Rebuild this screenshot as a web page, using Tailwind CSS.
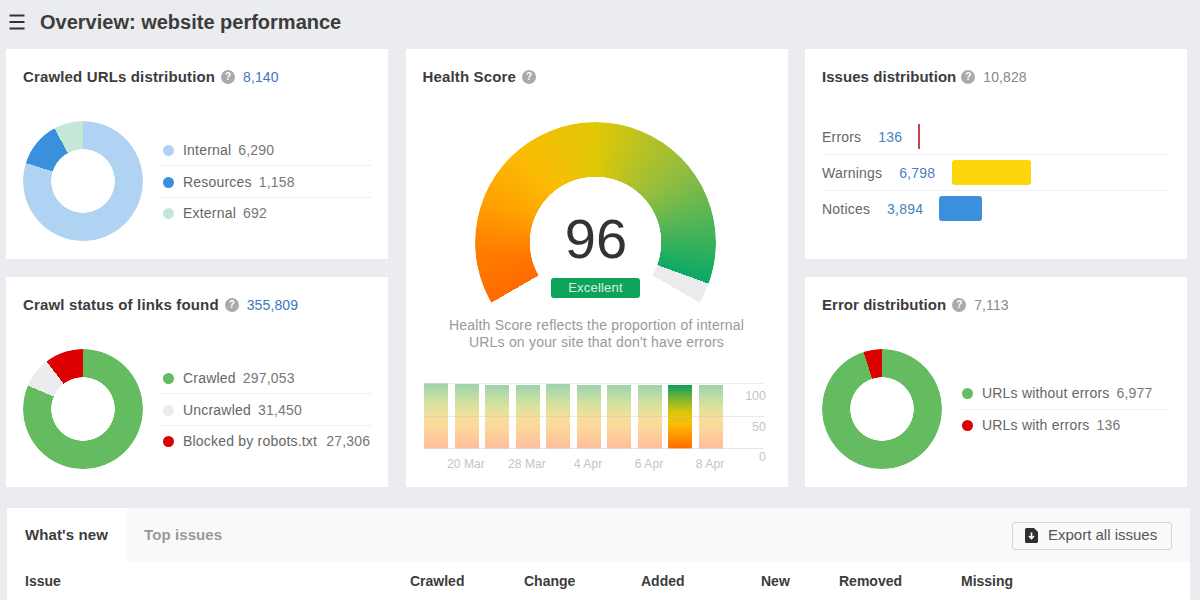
<!DOCTYPE html>
<html lang="en">
<head>
<meta charset="utf-8">
<title>Overview</title>
<script src="https://cdn.jsdelivr.net/npm/@tailwindcss/browser@4"></script>
</head>
<body class="bg-[#ebecef] font-['Liberation_Sans',Arial,sans-serif] text-[#333] overflow-hidden">
<div class="w-[1200px] h-[600px] overflow-hidden">
  <header class="h-[49px] flex items-center pl-[9px] pb-[5px]">
    <svg class="w-[16px] h-[16px] text-[#333]" viewBox="0 0 16 16" fill="none" stroke="currentColor" stroke-width="2"><path d="M0.5 1.5H15.5M0.5 8H15.5M0.5 14.5H15.5"/></svg>
    <h1 class="ml-[15px] text-[20px] leading-none font-bold text-[#3c3c3c]">Overview: website performance</h1>
  </header>

  <div class="grid grid-cols-[382px_382px_382px] grid-rows-[210px_210px] gap-x-[17.5px] gap-y-[18px] pl-[6px]">
    <!-- Crawled URLs -->
    <section class="bg-white px-[17px] pt-[18px]">
      <div class="flex items-center h-[20px] gap-[6px]">
        <h2 class="text-[15px] font-bold tracking-[0.15px] text-[#3c3c3c]">Crawled URLs distribution</h2>
        <span class="w-[14px] h-[14px] rounded-full bg-[#aaa] text-white text-[10px] font-bold flex items-center justify-center leading-none">?</span>
        <span class="text-[14px] tracking-[0.1px] text-[#3f77bd] ml-[2px]">8,140</span>
      </div>
      <div class="flex items-center mt-[34px] gap-[18px]">
        <div class="w-[120px] h-[120px] rounded-full bg-[conic-gradient(#b1d3f3_0_287.5deg,#3a90dd_287.5deg_331.5deg,#c5e8d6_331.5deg)] [mask:radial-gradient(circle,transparent_31.5px,black_32px)]"></div>
        <ul class="w-[210px] text-[14px] tracking-[0.2px] text-[#666]">
          <li class="h-[31.5px] pt-[1px] flex items-center gap-[9px] pl-[2px]"><span class="w-[11px] h-[11px] rounded-full bg-[#b1d3f3]"></span><span>Internal</span><span class="-ml-[2px] text-[#777]">6,290</span></li>
          <li class="h-[31.5px] pt-[1px] flex items-center gap-[9px] pl-[2px] border-t border-[#eeeff1]"><span class="w-[11px] h-[11px] rounded-full bg-[#3a90dd]"></span><span>Resources</span><span class="-ml-[2px] text-[#777]">1,158</span></li>
          <li class="h-[31.5px] pt-[1px] flex items-center gap-[9px] pl-[2px] border-t border-[#eeeff1]"><span class="w-[11px] h-[11px] rounded-full bg-[#c5e8d6]"></span><span>External</span><span class="-ml-[2px] text-[#777]">692</span></li>
        </ul>
      </div>
    </section>

    <!-- Health Score -->
    <section class="row-span-2 bg-white px-[17px] pt-[18px]">
      <div class="flex items-center h-[20px] gap-[6px]">
        <h2 class="text-[15px] font-bold tracking-[0.15px] text-[#3c3c3c]">Health Score</h2>
        <span class="w-[14px] h-[14px] rounded-full bg-[#aaa] text-white text-[10px] font-bold flex items-center justify-center leading-none">?</span>
      </div>
      <div class="relative w-[241px] h-[195px] ml-[52.5px] mt-[35px]">
        <div class="w-[241px] h-[241px] rounded-full bg-[conic-gradient(from_240deg,#ff6a00_0deg,#ff7d00_25deg,#ffa000_50deg,#fbbc04_80deg,#e0c805_120deg,#b9c222_145deg,#93bd3f_170deg,#5bb654_195deg,#0aaa66_230deg,#ebecee_230deg_240deg,transparent_240deg)] [mask:radial-gradient(circle,transparent_65.5px,black_66px)]"></div>
        <span class="absolute inset-x-0 top-[85px] pl-[1px] text-center text-[56px] leading-[64px] text-[#333]">96</span>
        <span class="absolute left-[76px] top-[156px] w-[89px] h-[20px] rounded-[3px] bg-[#0ea35a] text-[#d9f0e3] text-[13px] tracking-[0.2px] leading-[20px] text-center">Excellent</span>
      </div>
      <p class="text-[14px] tracking-[0.2px] leading-[17px] text-[#999] text-center">Health Score reflects the proportion of internal<br>URLs on your site that don't have errors</p>
      <div class="relative w-[340px] h-[66px] mt-[32px] ml-[1.5px]">
        <div class="flex h-full items-end gap-[6.5px]">
          <div class="w-[24px] h-[66px] bg-[linear-gradient(#9dd4ae,#d8e29e_32%,#fbdc9a_55%,#fbd79a_68%,#ffbc9c)]"></div>
          <div class="w-[24px] h-[65px] bg-[linear-gradient(#9dd4ae,#d8e29e_32%,#fbdc9a_55%,#fbd79a_68%,#ffbc9c)]"></div>
          <div class="w-[24px] h-[64px] bg-[linear-gradient(#9dd4ae,#d8e29e_32%,#fbdc9a_55%,#fbd79a_68%,#ffbc9c)]"></div>
          <div class="w-[24px] h-[64px] bg-[linear-gradient(#9dd4ae,#d8e29e_32%,#fbdc9a_55%,#fbd79a_68%,#ffbc9c)]"></div>
          <div class="w-[24px] h-[65px] bg-[linear-gradient(#9dd4ae,#d8e29e_32%,#fbdc9a_55%,#fbd79a_68%,#ffbc9c)]"></div>
          <div class="w-[24px] h-[64px] bg-[linear-gradient(#9dd4ae,#d8e29e_32%,#fbdc9a_55%,#fbd79a_68%,#ffbc9c)]"></div>
          <div class="w-[24px] h-[64px] bg-[linear-gradient(#9dd4ae,#d8e29e_32%,#fbdc9a_55%,#fbd79a_68%,#ffbc9c)]"></div>
          <div class="w-[24px] h-[64px] bg-[linear-gradient(#9dd4ae,#d8e29e_32%,#fbdc9a_55%,#fbd79a_68%,#ffbc9c)]"></div>
          <div class="w-[24px] h-[64px] bg-[linear-gradient(#0a9f5d,#8db82c_25%,#d8c60c_42%,#fbbc04_62%,#ff6a00)]"></div>
          <div class="w-[24px] h-[64px] bg-[linear-gradient(#9dd4ae,#d8e29e_32%,#fbdc9a_55%,#fbd79a_68%,#ffbc9c)]"></div>
        </div>
        <div class="absolute inset-0 flex flex-col justify-between pointer-events-none">
          <div class="h-px bg-[#dcdcdc]/50"></div>
          <div class="h-px bg-[#c8c8c8]/40"></div>
          <div class="h-px bg-[#dcdcdc]/70"></div>
        </div>
        <div class="absolute right-[-2px] top-[6px] h-[76px] flex flex-col justify-between items-end text-[12.5px] leading-[15px] text-[#c4c4c4]">
          <span>100</span><span>50</span><span>0</span>
        </div>
      </div>
      <div class="grid grid-cols-[61px_61px_61px_61px_61px] ml-[13px] mt-[8px] text-[12px] tracking-[0.1px] leading-[15px] text-[#c4c4c4] text-center">
        <span>20 Mar</span><span>28 Mar</span><span>4 Apr</span><span>6 Apr</span><span>8 Apr</span>
      </div>
    </section>

    <!-- Issues distribution -->
    <section class="bg-white px-[17px] pt-[18px]">
      <div class="flex items-center h-[20px] gap-[5px]">
        <h2 class="text-[15px] font-bold tracking-[0.05px] text-[#3c3c3c]">Issues distribution</h2>
        <span class="w-[14px] h-[14px] rounded-full bg-[#aaa] text-white text-[10px] font-bold flex items-center justify-center leading-none">?</span>
        <span class="text-[14px] tracking-[0.1px] text-[#888] ml-[3px]">10,828</span>
      </div>
      <ul class="mt-[31px] text-[14px] tracking-[0.2px] text-[#666]">
        <li class="h-[36px] pt-[2px] flex items-center"><span>Errors</span><span class="ml-[17px] text-[#4a80c4]">136</span><span class="ml-[16px] mb-[2px] w-[1.5px] h-[25px] bg-[#c4483f]"></span></li>
        <li class="h-[36px] pt-[2px] flex items-center border-t border-[#eeeff1]"><span>Warnings</span><span class="ml-[17px] text-[#4a80c4]">6,798</span><span class="ml-[17px] mb-[2px] w-[79px] h-[25px] rounded-[3px] bg-[#fcd60a]"></span></li>
        <li class="h-[36px] pt-[2px] flex items-center border-t border-[#eeeff1]"><span>Notices</span><span class="ml-[17px] text-[#4a80c4]">3,894</span><span class="ml-[16px] mb-[2px] w-[43px] h-[25px] rounded-[3px] bg-[#3a90dd]"></span></li>
      </ul>
    </section>

    <!-- Crawl status -->
    <section class="bg-white px-[17px] pt-[18px]">
      <div class="flex items-center h-[20px] gap-[6px]">
        <h2 class="text-[15px] font-bold tracking-[0.15px] text-[#3c3c3c]">Crawl status of links found</h2>
        <span class="w-[14px] h-[14px] rounded-full bg-[#aaa] text-white text-[10px] font-bold flex items-center justify-center leading-none">?</span>
        <span class="text-[14px] tracking-[0.1px] text-[#3f77bd] ml-[2px]">355,809</span>
      </div>
      <div class="flex items-center mt-[34px] gap-[18px]">
        <div class="w-[120px] h-[120px] rounded-full bg-[conic-gradient(#65bb5f_0_293deg,#ebecee_293deg_322.5deg,#dc0000_322.5deg)] [mask:radial-gradient(circle,transparent_31.5px,black_32px)]"></div>
        <ul class="w-[210px] text-[14px] tracking-[0.2px] text-[#666]">
          <li class="h-[31.5px] pt-[1px] flex items-center gap-[9px] pl-[2px]"><span class="w-[11px] h-[11px] rounded-full bg-[#65bb5f]"></span><span>Crawled</span><span class="-ml-[2px] text-[#777]">297,053</span></li>
          <li class="h-[31.5px] pt-[1px] flex items-center gap-[9px] pl-[2px] border-t border-[#eeeff1]"><span class="w-[11px] h-[11px] rounded-full bg-[#ebecee]"></span><span>Uncrawled</span><span class="-ml-[2px] text-[#777]">31,450</span></li>
          <li class="h-[31.5px] pt-[1px] flex items-center gap-[9px] pl-[2px] border-t border-[#eeeff1]"><span class="w-[11px] h-[11px] rounded-full bg-[#dc0000]"></span><span>Blocked by robots.txt</span><span class="text-[#777]">27,306</span></li>
        </ul>
      </div>
    </section>

    <!-- Error distribution -->
    <section class="bg-white px-[17px] pt-[18px]">
      <div class="flex items-center h-[20px] gap-[6px]">
        <h2 class="text-[15px] font-bold tracking-[0.05px] text-[#3c3c3c]">Error distribution</h2>
        <span class="w-[14px] h-[14px] rounded-full bg-[#aaa] text-white text-[10px] font-bold flex items-center justify-center leading-none">?</span>
        <span class="text-[14px] tracking-[0.1px] text-[#888] ml-[2px]">7,113</span>
      </div>
      <div class="flex items-center mt-[34px] gap-[18px]">
        <div class="w-[120px] h-[120px] rounded-full bg-[conic-gradient(#65bb5f_0_342deg,#dc0000_342deg)] [mask:radial-gradient(circle,transparent_31.5px,black_32px)]"></div>
        <ul class="w-[210px] text-[14px] tracking-[0.2px] text-[#666]">
          <li class="h-[31.5px] pt-[1px] flex items-center gap-[9px] pl-[2px]"><span class="w-[11px] h-[11px] rounded-full bg-[#65bb5f]"></span><span>URLs without errors</span><span class="-ml-[2px] text-[#777]">6,977</span></li>
          <li class="h-[31.5px] pt-[1px] flex items-center gap-[9px] pl-[2px] border-t border-[#eeeff1]"><span class="w-[11px] h-[11px] rounded-full bg-[#dc0000]"></span><span>URLs with errors</span><span class="-ml-[2px] text-[#777]">136</span></li>
        </ul>
      </div>
    </section>
  </div>

  <section class="ml-[7px] mt-[21px] w-[1183px] bg-white">
    <div class="h-[54px] flex items-center bg-[#f9f9fa]">
      <div class="w-[120px] h-full bg-white flex items-center pl-[18px] pt-[1px] text-[15px] tracking-[0.1px] font-bold text-[#3c3c3c]">What's new</div>
      <div class="pl-[17px] pt-[1px] text-[15px] tracking-[0.1px] font-bold text-[#999]">Top issues</div>
      <button class="ml-auto mr-[18px] mt-[1px] w-[160px] h-[28px] flex items-center pl-[12px] gap-[10px] bg-[#fafafa] border border-[#d6d7d9] rounded-[3px] text-[15px] text-[#555]">
        <svg class="w-[13px] h-[15px]" viewBox="0 0 13 15"><path fill="#2f2f2f" d="M1.5 0H9L13 4V13.5A1.5 1.5 0 0 1 11.5 15H1.5A1.5 1.5 0 0 1 0 13.5V1.5A1.5 1.5 0 0 1 1.5 0Z"/><path fill="none" stroke="#fff" stroke-width="1.6" d="M6.5 4.5V10M4 8L6.5 10.5L9 8"/></svg>
        <span>Export all issues</span>
      </button>
    </div>
    <div class="h-[38px] grid grid-cols-[385px_114px_117px_120px_78px_122px_auto] items-center pl-[18px] text-[14px] font-bold text-[#3c3c3c]">
      <span>Issue</span><span>Crawled</span><span>Change</span><span>Added</span><span>New</span><span>Removed</span><span>Missing</span>
    </div>
  </section>
</div>
</body>
</html>
